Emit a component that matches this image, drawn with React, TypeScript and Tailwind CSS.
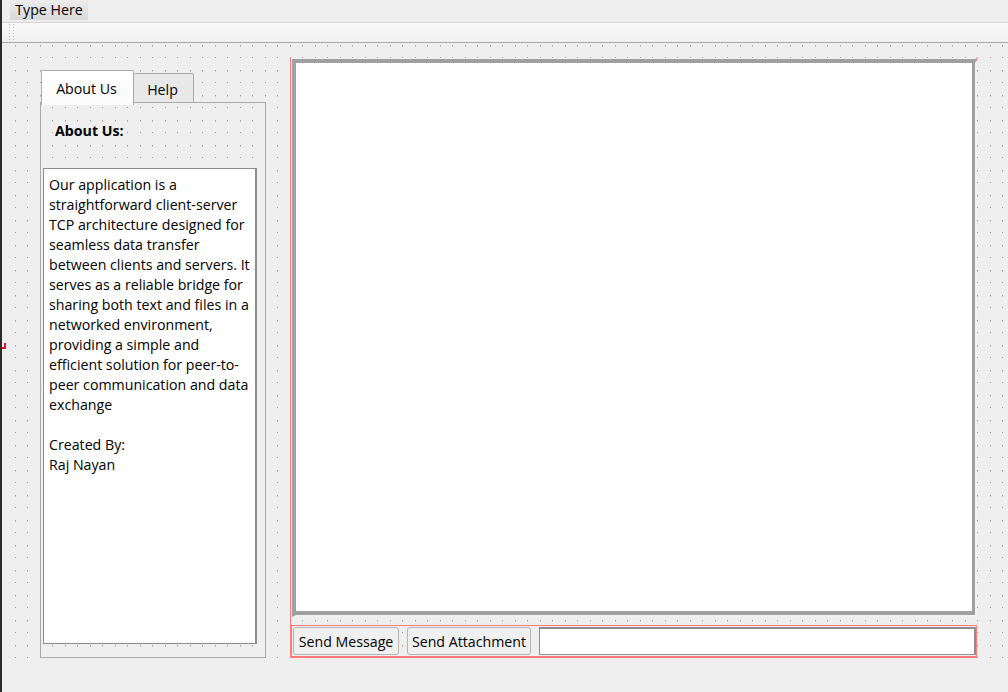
export default function App() {
  const lines = [
    "Our application is a",
    "straightforward client-server",
    "TCP architecture designed for",
    "seamless data transfer",
    "between clients and servers. It",
    "serves as a reliable bridge for",
    "sharing both text and files in a",
    "networked environment,",
    "providing a simple and",
    "efficient solution for peer-to-",
    "peer communication and data",
    "exchange",
  ];
  return (
    <div className="relative flex h-[692px] w-[1008px] overflow-hidden border-l-2 border-[#2b2b2b] bg-[#efefef] font-['Open_Sans','Liberation_Sans',sans-serif] text-[14.2px] leading-5 text-black">
      <div className="absolute left-[-2px] top-[343px] z-20 h-[6px] w-[6px] border-b-2 border-r-2 border-[#e81123]" />
      <div className="flex min-w-0 flex-1 flex-col">
        <div className="flex h-[23px] shrink-0 border-b border-[#d4d4d4] pl-2 pt-0">
          <div className="flex h-[20px] w-[78px] items-center justify-center bg-gradient-to-b from-[#ececec] to-[#d9d9d9]">Type Here</div>
        </div>
        <div className="flex h-[20px] shrink-0 items-center border-b border-[#a9a9a9] bg-gradient-to-b from-[#fafafa] to-[#f0f0f0] pl-[7px]">
          <div className="grid h-[18px] w-[5px] grid-cols-2 content-start gap-x-[2px] gap-y-[2px]">
            {Array.from({ length: 12 }, (_, i) => (
              <span key={i} className="h-px w-px bg-[#b5b5b5]" />
            ))}
          </div>
        </div>
        <div className="relative flex h-[615px] shrink-0 items-start">
          <svg className="absolute left-[13px] top-0 h-full w-[993px]" aria-hidden="true">
            <defs>
              <pattern id="dots" x="0" y="2" width="25" height="25" patternUnits="userSpaceOnUse">
                <rect x="0" y="0" width="1" height="1.5" fill="#9a9a9a" />
                <rect x="12" y="0" width="1" height="1.5" fill="#9a9a9a" />
                <rect x="0" y="12" width="1" height="1" fill="#9a9a9a" />
                <rect x="12" y="12" width="1" height="1" fill="#9a9a9a" />
              </pattern>
            </defs>
            <rect width="100%" height="100%" fill="url(#dots)" />
          </svg>

          <div className="relative ml-[38px] mt-[27px] flex h-[588px] w-[226px] flex-col">
            <div className="z-10 -mb-[2px] flex h-[35px] shrink-0 items-start pl-px">
              <div className="flex h-[35px] w-[93px] items-center justify-center rounded-t-[2px] border border-b-0 border-[#a9a9a9] bg-gradient-to-b from-white to-[#fbfbfb] pr-[2px] pt-[2px]">About Us</div>
              <div className="mt-[3px] flex h-[30px] w-[60px] items-center justify-center rounded-t-[2px] border border-l-0 border-[#a9a9a9] bg-[#e8e8e8] pr-[2px] pt-[3px]">Help</div>
            </div>
            <div className="-mt-px flex min-h-0 flex-1 flex-col border border-[#a9a9a9] pb-[13px] pl-[2px] pr-[8px]">
              <div className="flex h-[65px] shrink-0 items-start pl-[12px] pt-[18px] font-bold">About Us:</div>
              <div className="min-h-0 flex-1 border border-r-2 border-[#8c8c8c] bg-white pl-[5px] pt-[6px]">
                {lines.map((l) => (
                  <div key={l} className="whitespace-nowrap">{l}</div>
                ))}
                <div className="mt-5">Created By:</div>
                <div>Raj Nayan</div>
              </div>
            </div>
          </div>

          <div className="relative ml-[24px] mt-[15px] flex h-[600px] w-[687px] flex-col border-l border-[#ff7b7b] pl-px">
            <div className="absolute right-0 top-0 h-[3px] w-px bg-[#ff7b7b]" />
            <div className="mt-px h-[558px] w-[685px] shrink-0 border-b-2 border-l-4 border-r-2 border-t-4 border-b-[#f2f2f2] border-l-[#a0a0a0] border-r-[#f2f2f2] border-t-[#a0a0a0]">
              <div className="h-full w-full border-b-4 border-r-[3px] border-[#a0a0a0] bg-white" />
            </div>
            <div className="-ml-[2px] mt-[8px] flex h-[33px] w-[687px] items-start gap-2 border border-b-2 border-l-2 border-[#ff7b7b] pl-px pt-px">
              <button className="flex h-[28px] w-[106px] items-center justify-center rounded-[3px] border border-[#b4b4b4] bg-[#f0f0f0] pt-px">Send Message</button>
              <button className="flex h-[28px] w-[124px] items-center justify-center rounded-[3px] border border-[#b4b4b4] bg-[#f0f0f0] pt-px">Send Attachment</button>
              <div className="h-[28px] flex-1 border border-r-2 border-t-2 border-[#8e8e8e] bg-white" />
            </div>
          </div>
        </div>
      </div>
    </div>
  );
}
